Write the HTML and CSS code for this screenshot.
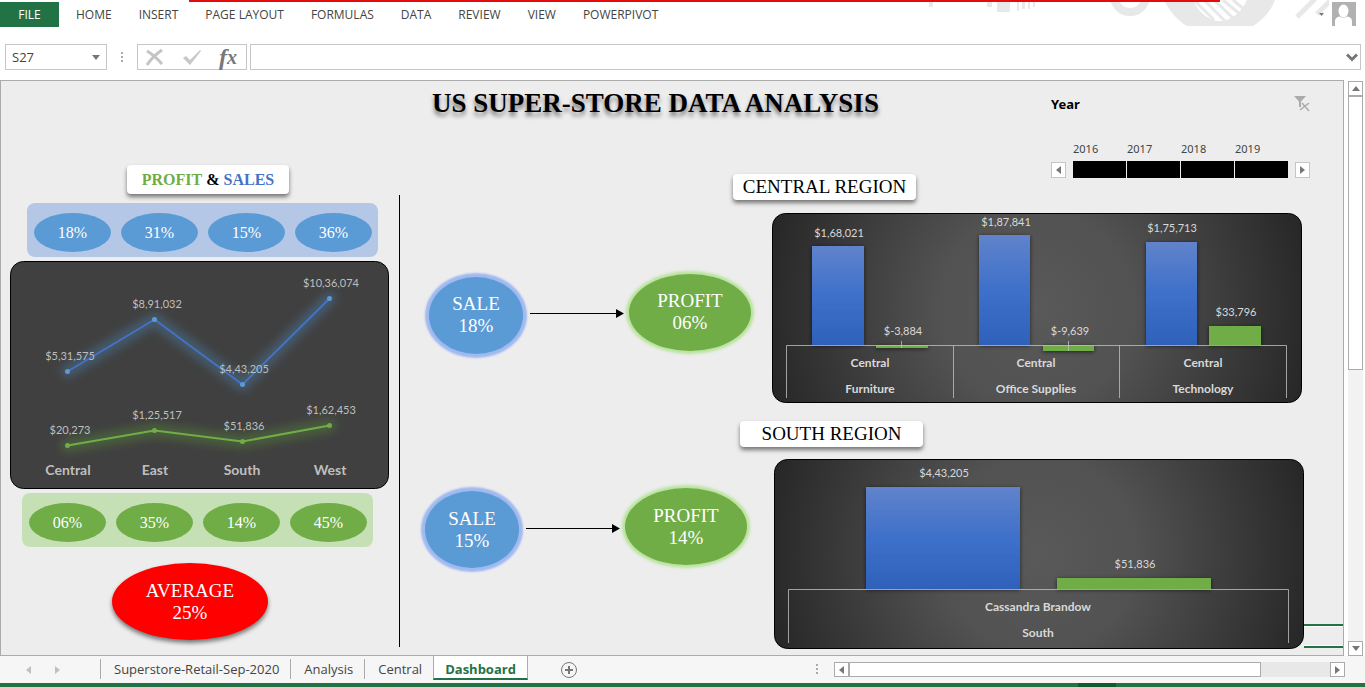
FILE: index.html
```html
<!DOCTYPE html>
<html lang="en">
<head>
<meta charset="utf-8">
<title>US Super-Store Data Analysis</title>
<link rel="stylesheet" href="styles.css">
</head>
<body>
<div class="app">
  <header class="ribbon">
    <svg class="ribbon-art" width="400" height="26" viewBox="929 0 400 26" aria-hidden="true">
      <g fill="#e8e8e8">
        <path d="M929 0h4v7h-4zM987 0h5v7h-5zM997 0h13v12h-13zM1017 0h2v11h-2zM1022 0h3v9h-3zM1028 0h2v9h-2zM1033 0h2v7h-2z"/>
        <path d="M1164 0C1170 12 1177 20 1187 26H1253C1263 20 1271 11 1275 0H1247C1242 11 1234 18 1224 21H1216C1206 18 1198 11 1193 0Z"/>
      </g>
      <circle cx="1130" cy="-4" r="16" fill="none" stroke="#e8e8e8" stroke-width="8"/>
      <g stroke="#e8e8e8" stroke-width="3"><path d="M1194 0l20 20M1204 0l22 22M1214 0l21 20M1223 0l18 15M1233 0l12 10"/></g>
      <g stroke="#e8e8e8" stroke-width="5"><path d="M1297 17l18-18M1317 14l15-15"/></g>
    </svg>
    <div class="red-line"></div>
    <nav class="ribbon-tabs">
      <button class="file-tab">FILE</button>
      <button>HOME</button>
      <button>INSERT</button>
      <button>PAGE LAYOUT</button>
      <button>FORMULAS</button>
      <button>DATA</button>
      <button>REVIEW</button>
      <button>VIEW</button>
      <button>POWERPIVOT</button>
    </nav>
    <button class="account" aria-label="Account">
      <svg width="5" height="3" viewBox="0 0 5 3"><path d="M0 0h5L2.500 3z" fill="#777"/></svg>
      <svg width="24" height="24" viewBox="0 0 24 24"><path d="M0 0h24v24H0z" fill="#b1b1b1"/><ellipse cx="11.500" cy="9" rx="5" ry="6.500" fill="#fff"/><path d="M3 24v-5q0-4 5-4.500q3.500 2.500 7 0q5 .5 5 4.500v5z" fill="#fff"/></svg>
    </button>
  </header>

  <div class="formula-bar">
    <div class="name-box">
      <input type="text" value="S27" aria-label="Name box">
      <button aria-label="Open name list"><svg width="8" height="5" viewBox="0 0 8 5"><path d="M0 0h8L4 5z" fill="#777"/></svg></button>
    </div>
    <svg class="grip" width="3" height="11" viewBox="0 0 3 11"><path d="M0 0h2v2H0zM0 4h2v2H0zM0 8h2v2H0z" fill="#aaa"/></svg>
    <div class="formula-tools">
      <button aria-label="Cancel"><svg width="18" height="17" viewBox="0 0 18 17"><path d="M1 2Q8 6 16 15M16 1Q7 7 1 16" fill="none" stroke="#c4c4c4" stroke-width="3"/></svg></button>
      <button aria-label="Enter"><svg width="20" height="17" viewBox="0 0 20 17"><path d="M1 9l3-2l4 4L18 1l1 1L8 16z" fill="#c8c8c8"/></svg></button>
      <button class="fx" aria-label="Insert function"><i>f</i><i class="fx-x">x</i></button>
    </div>
    <div class="formula-box">
      <input type="text" aria-label="Formula">
      <button aria-label="Expand formula bar"><svg width="12" height="9" viewBox="0 0 12 9"><path d="M1 1.500l5 5l5-5" fill="none" stroke="#777" stroke-width="3"/></svg></button>
    </div>
  </div>

  <div class="workspace">
    <main class="sheet">
      <section class="overview">
        <h2 class="tag tag-bold"><span class="green-text">PROFIT</span> &amp; <span class="blue-text">SALES</span></h2>
        <div class="share-strip sales-strip"><span>18%</span><span>31%</span><span>15%</span><span>36%</span></div>
        <svg class="trend" viewBox="0 0 379 228" role="img" aria-label="Sales and profit by region">
          <defs>
            <filter id="glow" x="-20%" y="-60%" width="140%" height="220%"><feGaussianBlur stdDeviation="4"/></filter>
          </defs>
          <rect x="0.500" y="0.500" width="378" height="227" rx="13" fill="#404040" stroke="#000"/>
          <g fill="none" stroke-linecap="round" stroke-linejoin="round">
            <g filter="url(#glow)" stroke-width="14" opacity=".32">
              <path stroke="#4f8fc4" d="M57.500 110.500L144.500 58.500L232.500 123.500L319.500 37.500"/>
              <path stroke="#5d9c35" d="M57.500 184.500L144.500 169.500L232.500 180.500L319.500 164.500"/>
            </g>
            <path stroke="#4472c4" stroke-width="2" d="M57.500 110.500L144.500 58.500L232.500 123.500L319.500 37.500"/>
            <path stroke="#70ad47" stroke-width="2" d="M57.500 184.500L144.500 169.500L232.500 180.500L319.500 164.500"/>
          </g>
          <g fill="#5b9bd5"><circle cx="57.500" cy="110.500" r="2.500"/><circle cx="144.500" cy="58.500" r="2.500"/><circle cx="232.500" cy="123.500" r="2.500"/><circle cx="319.500" cy="37.500" r="2.500"/></g>
          <g fill="#70ad47"><circle cx="57.500" cy="184.500" r="2.500"/><circle cx="144.500" cy="169.500" r="2.500"/><circle cx="232.500" cy="180.500" r="2.500"/><circle cx="319.500" cy="164.500" r="2.500"/></g>
          <g class="trend-value">
            <text x="60" y="99">$5,31,575</text><text x="147" y="47">$8,91,032</text><text x="234" y="112">$4,43,205</text><text x="321" y="26">$10,36,074</text>
            <text x="60" y="173">$20,273</text><text x="147" y="158">$1,25,517</text><text x="234" y="169">$51,836</text><text x="321" y="153">$1,62,453</text>
          </g>
          <g class="trend-region">
            <text x="58" y="214">Central</text><text x="145" y="214">East</text><text x="232" y="214">South</text><text x="320" y="214">West</text>
          </g>
        </svg>
        <div class="share-strip profit-strip"><span>06%</span><span>35%</span><span>14%</span><span>45%</span></div>
        <div class="average">AVERAGE<br>25%</div>
      </section>

      <section class="regions">
        <div class="top">
          <div class="heading">
            <h1>US SUPER-STORE DATA ANALYSIS</h1>
            <h2 class="tag tag-central">CENTRAL REGION</h2>
          </div>
          <section class="timeline" aria-label="Year timeline">
            <div class="timeline-head">
              <h3>Year</h3>
              <button aria-label="Clear filter"><svg width="16" height="16" viewBox="0 0 16 16"><path d="M0 0h12L7 5.500V11H5V5.500z" fill="#ababab"/><path d="M6 14L15 7M8 7l7 8" stroke="#ababab" stroke-width="1.500"/></svg></button>
            </div>
            <div class="timeline-body">
              <button class="step" aria-label="Earlier"><svg width="5" height="8" viewBox="0 0 5 8"><path d="M5 0v8L0 4z" fill="#777"/></svg></button>
              <div class="years">
                <button>2016<i></i></button><button>2017<i></i></button><button>2018<i></i></button><button>2019<i></i></button>
              </div>
              <button class="step" aria-label="Later"><svg width="5" height="8" viewBox="0 0 5 8"><path d="M0 0v8L5 4z" fill="#777"/></svg></button>
            </div>
          </section>
        </div>

        <div class="region-row central-row">
          <div class="flow">
            <div class="bubble sale">SALE<br>18%</div>
            <svg class="arrow" width="94" height="9" viewBox="0 0 94 9"><path d="M0 4h88v1H0zM86 0l8 4.500L86 9z"/></svg>
            <div class="bubble profit">PROFIT<br>06%</div>
          </div>
          <svg class="bars" viewBox="0 0 530 190" role="img" aria-label="Central region sales and profit by category">
            <defs>
              <radialGradient id="panel" gradientUnits="userSpaceOnUse" cx="265" cy="95" r="281"><stop offset="0" stop-color="#595959"/><stop offset=".35" stop-color="#525252"/><stop offset="1" stop-color="#262626"/></radialGradient>
              <linearGradient id="blue" x2="0" y2="1"><stop offset="0" stop-color="#6083cb"/><stop offset=".5" stop-color="#3e70ca"/><stop offset="1" stop-color="#2e61ba"/></linearGradient>
              <filter id="shade" x="-20%" y="-20%" width="140%" height="150%"><feDropShadow dx="0" dy="1" stdDeviation="2" flood-color="#000" flood-opacity=".6"/></filter>
            </defs>
            <rect x="0.500" y="0.500" width="529" height="189" rx="13" fill="url(#panel)" stroke="#000"/>
            <g filter="url(#shade)">
              <g fill="url(#blue)"><rect x="40" y="33" width="52" height="99"/><rect x="207" y="22" width="51" height="110"/><rect x="374" y="29" width="51" height="103"/></g>
              <g fill="#70ad47"><rect x="104" y="132" width="52" height="3"/><rect x="271" y="132" width="51" height="6"/><rect x="437" y="113" width="52" height="19"/></g>
            </g>
            <path class="axis" d="M14.500 185V132.500H514.500V185M181.500 132.500V185M347.500 132.500V185M129.500 128v7M296.500 128v10"/>
            <g class="bar-value"><text x="67" y="24">$1,68,021</text><text x="131" y="122">$-3,884</text><text x="234" y="13">$1,87,841</text><text x="298" y="122">$-9,639</text><text x="400" y="19">$1,75,713</text><text x="464" y="103">$33,796</text></g>
            <g class="bar-name"><text x="98" y="154">Central</text><text x="98" y="180">Furniture</text><text x="264" y="154">Central</text><text x="264" y="180">Office Supplies</text><text x="431" y="154">Central</text><text x="431" y="180">Technology</text></g>
          </svg>
        </div>

        <h2 class="tag tag-south">SOUTH REGION</h2>

        <div class="region-row south-row">
          <div class="flow">
            <div class="bubble sale">SALE<br>15%</div>
            <svg class="arrow" width="94" height="9" viewBox="0 0 94 9"><path d="M0 4h88v1H0zM86 0l8 4.500L86 9z"/></svg>
            <div class="bubble profit">PROFIT<br>14%</div>
          </div>
          <svg class="bars" viewBox="0 0 530 190" role="img" aria-label="South region sales and profit">
            <rect x="0.500" y="0.500" width="529" height="189" rx="13" fill="url(#panel)" stroke="#000"/>
            <g filter="url(#shade)"><rect x="92" y="28" width="154" height="102" fill="url(#blue)"/><rect x="283" y="119" width="154" height="11" fill="#70ad47"/></g>
            <path class="axis" d="M14.500 184V130.500H514.500V184"/>
            <g class="bar-value"><text x="170" y="18">$4,43,205</text><text x="361" y="109">$51,836</text></g>
            <g class="bar-name"><text x="264" y="152">Cassandra Brandow</text><text x="264" y="178">South</text></g>
          </svg>
        </div>
        <div class="selected-cell"></div>
      </section>
    </main>
    <div class="vscroll">
      <button aria-label="Scroll up"><svg width="8" height="5" viewBox="0 0 8 5"><path d="M0 5h8L4 0z" fill="#777"/></svg></button>
      <div class="thumb"></div>
      <div class="track"></div>
      <button aria-label="Scroll down"><svg width="8" height="5" viewBox="0 0 8 5"><path d="M0 0h8L4 5z" fill="#777"/></svg></button>
    </div>
  </div>

  <footer class="tab-bar">
    <div class="tab-nav">
      <button aria-label="Previous sheets"><svg width="5" height="8" viewBox="0 0 5 8"><path d="M5 0v8L0 4z" fill="#c0c0c0"/></svg></button>
      <button aria-label="Next sheets"><svg width="5" height="8" viewBox="0 0 5 8"><path d="M0 0v8L5 4z" fill="#c0c0c0"/></svg></button>
    </div>
    <nav class="sheet-tabs">
      <button>Superstore-Retail-Sep-2020</button>
      <button>Analysis</button>
      <button>Central</button>
      <button class="active">Dashboard</button>
    </nav>
    <button class="add-sheet" aria-label="New sheet"><svg width="16" height="16" viewBox="0 0 16 16"><circle cx="8" cy="8" r="7.500" fill="none" stroke="#777"/><path d="M7 4h2v3h3v2H9v3H7V9H4V7h3z" fill="#777"/></svg></button>
    <svg class="tab-grip" width="3" height="11" viewBox="0 0 3 11"><path d="M0 0h2v2H0zM0 4h2v2H0zM0 8h2v2H0z" fill="#aaa"/></svg>
    <div class="hscroll">
      <button aria-label="Scroll left"><svg width="5" height="8" viewBox="0 0 5 8"><path d="M5 0v8L0 4z" fill="#777"/></svg></button>
      <div class="thumb"></div>
      <div class="track"></div>
      <button aria-label="Scroll right"><svg width="5" height="8" viewBox="0 0 5 8"><path d="M0 0v8L5 4z" fill="#777"/></svg></button>
    </div>
  </footer>
  <div class="status-bar"><div class="status-mark"></div></div>
</div>
</body>
</html>
```
FILE: styles.css
```css
* { box-sizing: border-box; }
body { margin: 0; background: #fff; color: #444; font: 12px/16px "Open Sans", "Noto Sans", sans-serif; }
button { border: 0; padding: 0; background: none; font: inherit; color: inherit; display: flex; align-items: center; justify-content: center; white-space: nowrap; }
input { border: 0; padding: 0; background: none; font: inherit; color: inherit; min-width: 0; outline: 0; }
h1, h2, h3 { margin: 0; }
svg { display: block; flex: none; }

.app { min-height: 100vh; display: flex; flex-direction: column; }

/* Ribbon */
.ribbon { position: relative; display: flex; justify-content: space-between; padding: 2px 9px 0 0; height: 27px; }
.ribbon-art { position: absolute; top: 0; right: 36px; }
.red-line { position: absolute; top: 0; left: 189px; right: 145px; height: 2px; background: #e30b0b; }
.ribbon-tabs { display: flex; gap: 27px; }
.file-tab { width: 59px; margin-right: -10px; background: #217346; color: #fff; }
.account { position: relative; height: 24px; gap: 8px; }

/* Formula bar */
.formula-bar { display: flex; align-items: center; margin: 17px 4px 10px 5px; height: 26px; }
.name-box, .formula-tools, .formula-box { display: flex; align-items: center; height: 26px; border: 1px solid #c6c6c6; }
.name-box { width: 102px; padding: 0 6px; font-size: 13px; }
.name-box input { flex: 1; }
.grip { margin: 0 13px 0 14px; }
.formula-tools { width: 110px; justify-content: space-between; padding: 0 9px 0 8px; }
.fx { font: bold 24px/24px "Liberation Serif", serif; color: #777; }
.fx-x { font-size: 20px; }
.formula-box { flex: 1; margin-left: 3px; padding-right: 2px; }
.formula-box input { flex: 1; }

/* Sheet */
.workspace { flex: 1; display: flex; }
.sheet { flex: 1; display: flex; background: #ededed; border: 1px solid #ababab; font-family: "Liberation Serif", "Times New Roman", serif; }
.overview { width: 399px; flex: none; padding: 84px 0 14px 9px; display: flex; flex-direction: column; align-items: flex-start; position: relative; }
.overview::after { content: ""; position: absolute; right: 0; top: 114px; bottom: 8px; width: 1px; background: #000; }
.tag { display: flex; align-items: center; justify-content: center; background: #fff; color: #000; border-radius: 4px; width: 183px; height: 26px; font-size: 19px; line-height: 22px; font-weight: 400; box-shadow: 0 3px 4px rgba(0, 0, 0, .5); }
.tag-bold { width: 162px; height: 29px; font-size: 16px; font-weight: 700; white-space: pre; margin: 0 0 9px 117px; }
.green-text { color: #70ad47; }
.blue-text { color: #4472c4; }
.share-strip { display: flex; justify-content: space-between; align-items: center; width: 351px; height: 54px; padding: 5px 6px 0 7px; border-radius: 8px; color: #fff; font-size: 16px; }
.share-strip span { width: 77px; height: 39px; border-radius: 50%; display: flex; align-items: center; justify-content: center; }
.sales-strip { background: #b4c7e7; margin-left: 17px; }
.sales-strip span { background: #5b9bd5; }
.profit-strip { background: #c5e0b4; margin-left: 12px; }
.profit-strip span { background: #70ad47; }
.trend { width: 379px; height: 228px; margin: 4px 0; }
.trend text, .bars text { font-family: Lato, "Open Sans", sans-serif; text-anchor: middle; }
.trend-value { font-size: 11px; fill: #bfbfbf; }
.trend-region { font-size: 14px; font-weight: 700; fill: #bfbfbf; }
.average { display: flex; align-items: center; justify-content: center; text-align: center; width: 156px; height: 77px; margin: 16px 0 0 102px; border-radius: 50%; background: #f00; color: #fff; font-size: 19px; line-height: 22px; box-shadow: 0 3px 4px rgba(0, 0, 0, .5); }

.regions { flex: 1; min-width: 0; position: relative; display: flex; flex-direction: column; }
.top { display: flex; justify-content: space-between; height: 132px; padding-right: 33px; }
.heading { display: flex; flex-direction: column; justify-content: space-between; padding: 6px 0 13px 32px; }
h1 { font-size: 27px; line-height: 32px; color: #000; white-space: nowrap; text-shadow: 0 4px 4px rgba(0, 0, 0, .5); }
.tag-central { margin-left: 301px; }
.tag-south { margin: 18px 0 12px 340px; }

.timeline { width: 259px; padding-top: 15px; font-family: "Noto Sans", "Open Sans", sans-serif; }
.timeline-head { display: flex; justify-content: space-between; align-items: center; height: 16px; }
.timeline-head h3 { font-size: 13px; color: #000; }
.timeline-body { display: flex; align-items: flex-end; gap: 7px; margin-top: 29px; }
.step { width: 15px; height: 16px; background: #fff; border: 1px solid #c6c6c6; }
.years { flex: 1; display: grid; grid-template-columns: repeat(4, 1fr); gap: 1px; font-size: 11px; }
.years button { flex-direction: column; align-items: stretch; text-align: left; gap: 4px; }
.years i { height: 17px; background: #000; }

.region-row { display: flex; align-items: center; }
.central-row { padding: 0 41px 0 29px; }
.south-row { padding: 0 39px 0 25px; }
.flow { display: flex; align-items: center; flex: none; }
.central-row .flow { padding-top: 11px; margin-right: 21px; }
.south-row .flow { padding-bottom: 52px; margin-right: 27px; }
.bubble { display: flex; align-items: center; justify-content: center; text-align: center; height: 77px; border-radius: 50%; color: #fff; font-size: 19px; line-height: 22px; }
.sale { width: 94px; background: #5b9bd5; box-shadow: 0 0 2px 4px #a0b9f0; margin-top: 3px; }
.profit { width: 122px; background: #70ad47; box-shadow: 0 0 3px 3px #b8e39c; margin-bottom: 3px; }
.arrow { margin: 0 5px 0 7px; }
.bars { flex: 1; min-width: 0; height: auto; }
.axis { fill: none; stroke: #bfbfbf; stroke-opacity: .8; }
.bar-value { font-size: 11px; fill: #d9d9d9; }
.bar-name { font-size: 12px; font-weight: 700; fill: #d9d9d9; }
.selected-cell { position: absolute; right: 0; bottom: 7px; width: 39px; height: 24px; border: solid #217346; border-width: 2px 0; box-shadow: inset 0 1px #fff, inset 0 -1px #fff; }

/* Scroll bars */
.vscroll { width: 15px; margin: 1px 2px 0 4px; display: flex; flex-direction: column; }
.vscroll button, .hscroll button { width: 15px; height: 15px; background: #fff; border: 1px solid #ababab; }
.vscroll .thumb { flex: 272; background: #fff; border: 1px solid #ababab; }
.vscroll .track { flex: 272; background: #f2f2f2; }
.hscroll { display: flex; width: 38%; }
.hscroll .thumb { flex: 410; background: #fff; border: 1px solid #ababab; }
.hscroll .track { flex: 69; background: #e8e8e8; }

/* Sheet tabs */
.tab-bar { display: flex; align-items: center; height: 27px; background: #f6f6f6; padding-right: 20px; font-size: 13px; }
.tab-nav { width: 100px; display: flex; gap: 24px; padding-left: 26px; }
.sheet-tabs { display: flex; align-items: flex-start; align-self: flex-start; }
.sheet-tabs button { height: 20px; margin-top: 3px; padding: 0 11px 0 13px; border-left: 1px solid #ababab; }
.sheet-tabs .active { height: 24px; margin-top: 0; padding: 3px 11px 0; background: #fff; color: #217346; font-weight: 700; border-right: 1px solid #ababab; border-bottom: 2px solid #217346; }
.add-sheet { margin-left: 33px; }
.tab-grip { margin: 0 15px 0 auto; }
.status-bar { height: 4px; background: #217346; padding-left: 79%; }
.status-mark { width: 38px; height: 4px; background: #0e5c2f; }
```
